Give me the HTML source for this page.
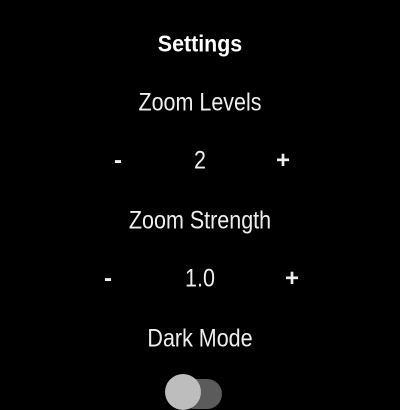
<!DOCTYPE html>
<html><head><style>
body{margin:0;width:400px;height:400px;background:#000;overflow:hidden;position:relative;font-family:"Liberation Sans",sans-serif;color:#fff}
.t{position:absolute;transform:translate(-50%,-50%) scaleX(0.86);white-space:nowrap;font-size:25px;font-weight:300;color:#eee}
.b{font-weight:bold;font-size:23px;color:#fff;transform:translate(-50%,-50%) scaleX(0.93)}
.p{font-weight:bold;font-size:24px;transform:translate(-50%,-50%)}
</style></head><body>
<div class="t b" style="left:200px;top:44px">Settings</div>
<div class="t" style="left:200px;top:103px">Zoom Levels</div>
<div class="t p" style="left:118px;top:161px">-</div>
<div class="t" style="left:200px;top:161px">2</div>
<div class="t p" style="left:283px;top:161px">+</div>
<div class="t" style="left:200px;top:221px">Zoom Strength</div>
<div class="t p" style="left:108px;top:279px">-</div>
<div class="t" style="left:200px;top:279px">1.0</div>
<div class="t p" style="left:292px;top:279px">+</div>
<div class="t" style="left:200px;top:339px">Dark Mode</div>
<div style="position:absolute;left:180px;top:379px;width:42px;height:30px;border-radius:15px;background:#5b5b5b"></div>
<div style="position:absolute;left:165px;top:374px;width:36px;height:36px;border-radius:50%;background:#bdbdbd"></div>
</body></html>
